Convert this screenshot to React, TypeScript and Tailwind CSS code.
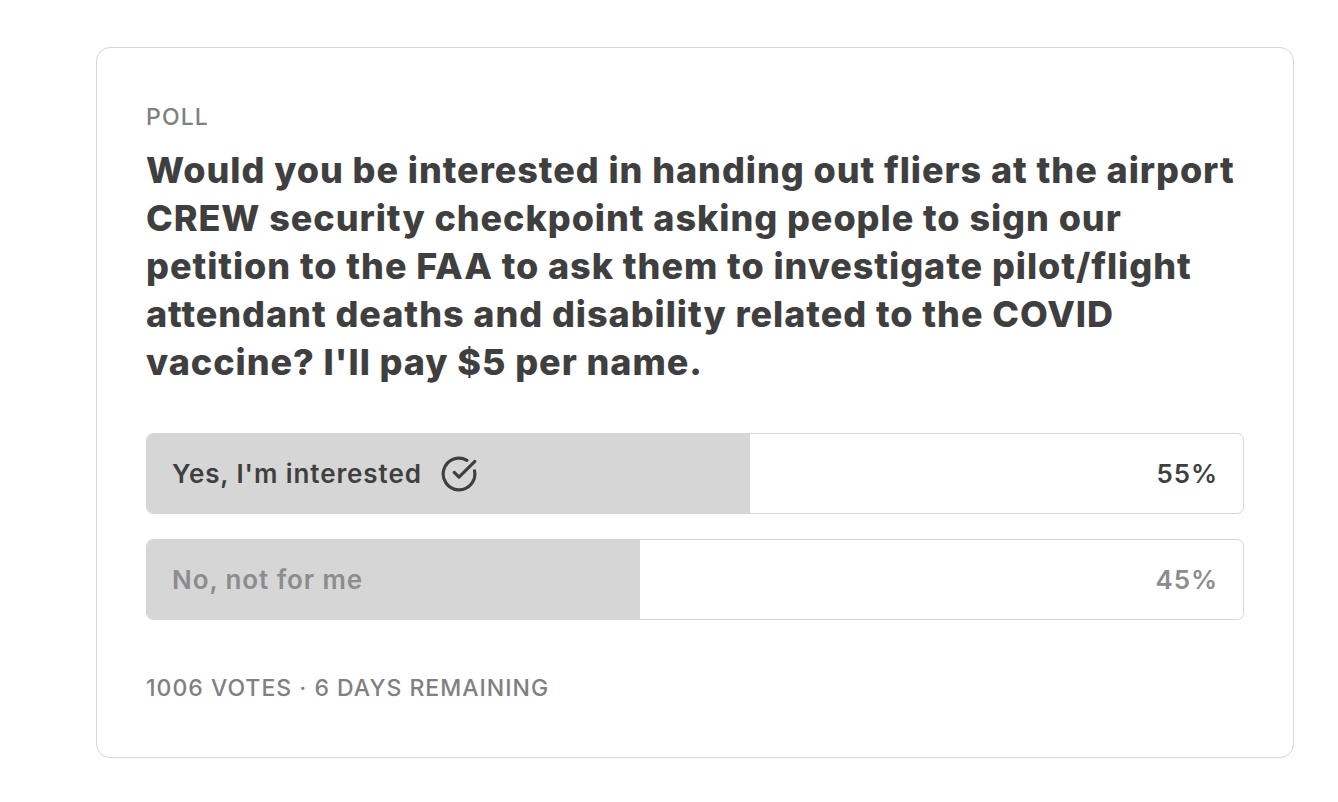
import { CircleCheckBig } from 'lucide-react'

const options = [
  { label: "Yes, I'm interested", pct: 55, chosen: true },
  { label: 'No, not for me', pct: 45, chosen: false },
]

export default function App() {
  return (
    <div className="min-h-screen bg-white font-['Inter',sans-serif]">
      <div className="ml-[96px] pt-[47px]">
        <div className="w-[1198px] rounded-[14px] border border-[#d6d6d6] px-[49px] pt-[57px] pb-[57px]">
          <div className="text-[23px] font-medium leading-[24px] tracking-[0.05em] text-[#808080]">POLL</div>
          <h1 className="mt-[17px] text-[36px] font-extrabold leading-[48px] tracking-[0.026em] text-[#3f3f3f]">
            Would you be interested in handing out fliers at the airport
            <br />
            CREW security checkpoint asking people to sign our
            <br />
            petition to the FAA to ask them to investigate pilot/flight
            <br />
            attendant deaths and disability related to the COVID
            <br />
            vaccine? I'll pay $5 per name.
          </h1>

          {/* Options */}
          <div className="mt-[47px] flex flex-col gap-[25px]">
            {options.map((o) => (
              <div
                key={o.label}
                className="relative h-[81px] overflow-hidden rounded-[7px] border border-[#d6d6d6] bg-white"
              >
                <div className="absolute inset-y-0 left-0 bg-[#d6d6d6]" style={{ width: `${o.pct}%` }} />
                <div
                  className={`relative flex h-full items-center justify-between px-[25px] text-[26px] font-semibold tracking-[0.035em] ${
                    o.chosen ? 'text-[#3f3f3f]' : 'text-[#8c8c8c]'
                  }`}
                >
                  <span className="flex items-center gap-[18px]">
                    {o.label}
                    {o.chosen && <CircleCheckBig className="h-[38px] w-[38px]" strokeWidth={2} />}
                  </span>
                  <span>{o.pct}%</span>
                </div>
              </div>
            ))}
          </div>

          <div className="mt-[56px] text-[23px] font-medium leading-[24px] tracking-[0.044em] text-[#808080]">
            1006 VOTES · 6 DAYS REMAINING
          </div>
        </div>
      </div>
    </div>
  )
}
